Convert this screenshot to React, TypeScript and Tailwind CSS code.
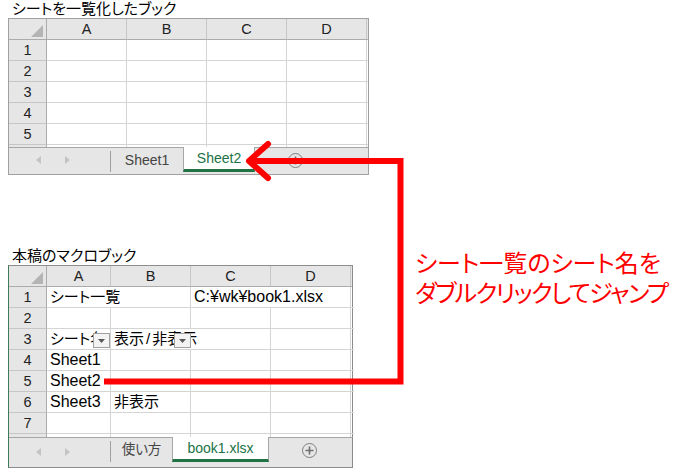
import React from 'react';

const cellLine = 'border-r border-b border-[#d4d4d4]';

const Corner = () => (
  <div className="relative bg-[#e6e6e6] border-r border-b border-[#ababab]">
    <svg className="absolute right-[3px] bottom-[2px]" width="12" height="12" viewBox="0 0 12 12">
      <polygon points="12,0 12,12 0,12" fill="#b4b4b4" />
    </svg>
  </div>
);

const ColHead = ({ label }: { label: string }) => (
  <div className="flex items-center justify-center pt-[2px] bg-[#e6e6e6] border-r border-b border-r-[#c6c6c6] border-b-[#ababab] text-[14.5px] text-[#222]">
    {label}
  </div>
);

const RowHead = ({ label }: { label?: string }) => (
  <div className="flex items-center justify-center pt-[1px] bg-[#e6e6e6] border-r border-b border-r-[#ababab] border-b-[#c6c6c6] text-[14.5px] text-[#222]">
    {label}
  </div>
);

const Cell = ({ children, open, className = '' }: { children?: React.ReactNode; open?: boolean; className?: string }) => (
  <div
    className={`relative whitespace-nowrap pl-[3px] text-[16px] leading-[20px] text-black border-b border-[#d4d4d4] ${
      open ? '' : 'border-r'
    } ${className}`}
  >
    {children}
  </div>
);

const Jp = ({ children }: { children: React.ReactNode }) => (
  <span className="text-[15px] [font-feature-settings:'palt']">{children}</span>
);

const FilterButton = () => (
  <div className="absolute right-0 top-[4px] z-10 flex h-[15px] w-[17px] items-center justify-center bg-[#f3f3f3] border border-[#a0a0a0]">
    <svg width="7" height="4" viewBox="0 0 7 4">
      <polygon points="0,0 7,0 3.5,4" fill="#595959" />
    </svg>
  </div>
);

const ScrollArrows = () => (
  <div className="flex w-[101px] items-center pl-[27px] gap-[24px] pb-[2px]">
    <svg width="5" height="8" viewBox="0 0 5 8">
      <polygon points="5,0 5,8 0,4" fill="#c4c4c4" />
    </svg>
    <svg width="5" height="8" viewBox="0 0 5 8">
      <polygon points="0,0 0,8 5,4" fill="#c4c4c4" />
    </svg>
  </div>
);

const PlusCircle = () => (
  <div className="flex h-[15px] w-[15px] items-center justify-center rounded-full border border-[#7f7f7f]">
    <svg width="9" height="9" viewBox="0 0 9 9">
      <path d="M4.5 0.5V8.5M0.5 4.5H8.5" stroke="#6f6f6f" strokeWidth="1.6" />
    </svg>
  </div>
);

const TabBar = ({ first, active, firstW, activeW, height }: { first: React.ReactNode; active: string; firstW: string; activeW: string; height: string }) => (
  <div className={`flex ${height} bg-[#e6e6e6] border-t border-[#a6a6a6]`}>
    <ScrollArrows />
    <div className="my-[3px] w-px self-start h-[21px] bg-[#a0a0a0]" />
    <div className={`flex h-[24px] items-center justify-center text-[14px] text-[#444] ${firstW}`}>{first}</div>
    <div
      className={`-mt-px flex h-[25px] items-center justify-center bg-white border-l border-r border-[#a6a6a6] border-b-[3px] border-b-[#217346] text-[14px] text-[#217346] ${activeW}`}
    >
      {active}
    </div>
    <div className="ml-[33px] flex h-[24px] items-center">
      <PlusCircle />
    </div>
  </div>
);

export default function App() {
  const rowsTop = ['1', '2', '3', '4', '5'];

  return (
    <div className="relative h-[474px] w-[674px] overflow-hidden bg-white font-['Liberation_Sans','Noto_Sans_CJK_JP',sans-serif]">
      {/* book that lists the sheets */}
      <div className="h-[18px] pl-[12px] text-[15px] leading-[18px] text-black [font-feature-settings:'palt']">
        シートを一覧化したブック
      </div>
      <div className="ml-[8px] w-[361px] border border-[#a0a0a0] bg-white">
        <div className="grid grid-cols-[38px_80px_80px_80px_80px_1px] grid-rows-[21px_21px_21px_21px_21px_21px_2px]">
          <Corner />
          {['A', 'B', 'C', 'D'].map(c => (
            <ColHead key={c} label={c} />
          ))}
          <div className="bg-[#e6e6e6] border-b border-[#ababab]" />
          {rowsTop.map(r => (
            <React.Fragment key={r}>
              <RowHead label={r} />
              <div className={cellLine} />
              <div className={cellLine} />
              <div className={cellLine} />
              <div className={cellLine} />
              <div className="border-b border-[#d4d4d4]" />
            </React.Fragment>
          ))}
          <div className="bg-[#e6e6e6] border-r border-[#ababab]" />
          <div className="border-r border-[#d4d4d4]" />
          <div className="border-r border-[#d4d4d4]" />
          <div className="border-r border-[#d4d4d4]" />
          <div className="border-r border-[#d4d4d4]" />
          <div />
        </div>
        <TabBar first="Sheet1" active="Sheet2" firstW="w-[72px]" activeW="w-[72px]" height="h-[27px]" />
      </div>

      {/* macro book */}
      <div className="mt-[72px] flex">
        <div>
          <div className="h-[18px] pl-[12px] text-[15px] leading-[18px] text-black [font-feature-settings:'palt']">
            本稿のマクロブック
          </div>
          <div className="ml-[8px] w-[345px] border border-[#8c8c8c] border-l-[#3f7a58] bg-white">
            <div className="grid grid-cols-[38px_64px_80px_80px_80px_1px] grid-rows-[21px_21px_21px_21px_21px_21px_21px_21px_3px]">
              <Corner />
              {['A', 'B', 'C', 'D'].map(c => (
                <ColHead key={c} label={c} />
              ))}
              <div className="bg-[#e6e6e6] border-b border-[#ababab]" />

              <RowHead label="1" />
              <Cell open className="z-10">
                <Jp>シート一覧</Jp>
              </Cell>
              <Cell />
              <Cell open className="z-10">C:¥wk¥book1.xlsx</Cell>
              <Cell />
              <Cell open />

              <RowHead label="2" />
              <Cell />
              <Cell />
              <Cell />
              <Cell />
              <Cell open />

              <RowHead label="3" />
              <Cell className="overflow-hidden">
                <Jp>シート名</Jp>
                <FilterButton />
              </Cell>
              <Cell open className="z-10">
                <Jp>
                  表示<span className="px-[2px]">/</span>非表示
                </Jp>
                <FilterButton />
              </Cell>
              <Cell />
              <Cell />
              <Cell open />

              <RowHead label="4" />
              <Cell>Sheet1</Cell>
              <Cell />
              <Cell />
              <Cell />
              <Cell open />

              <RowHead label="5" />
              <Cell>Sheet2</Cell>
              <Cell />
              <Cell />
              <Cell />
              <Cell open />

              <RowHead label="6" />
              <Cell>Sheet3</Cell>
              <Cell>
                <Jp>非表示</Jp>
              </Cell>
              <Cell />
              <Cell />
              <Cell open />

              <RowHead label="7" />
              <Cell />
              <Cell />
              <Cell />
              <Cell />
              <Cell open />

              <div className="bg-[#e6e6e6] border-r border-[#ababab]" />
              <div className="border-r border-[#d4d4d4]" />
              <div className="border-r border-[#d4d4d4]" />
              <div className="border-r border-[#d4d4d4]" />
              <div className="border-r border-[#d4d4d4]" />
              <div />
            </div>
            <TabBar
              first={<span className="text-[13.5px] [font-feature-settings:'palt']">使い方</span>}
              active="book1.xlsx"
              firstW="w-[61px]"
              activeW="w-[97px]"
              height="h-[30px]"
            />
          </div>
        </div>

        <div className="ml-[62px] whitespace-nowrap pt-[2px] text-[24px] leading-[30px] text-[#ff0000] [font-feature-settings:'palt']">
          <div>シート一覧のシート名を</div>
          <div className="tracking-[-1.6px]">ダブルクリックしてジャンプ</div>
        </div>
      </div>

      {/* jump arrow */}
      <svg className="pointer-events-none absolute inset-0 z-20" width="674" height="474" viewBox="0 0 674 474">
        <path d="M104 381.5H400.5V161H252" fill="none" stroke="#ff0000" strokeWidth="6" />
        <polyline
          points="268,144 249,161 268,178"
          fill="none"
          stroke="#ff0000"
          strokeWidth="6"
          strokeLinecap="round"
          strokeLinejoin="round"
        />
      </svg>
    </div>
  );
}
